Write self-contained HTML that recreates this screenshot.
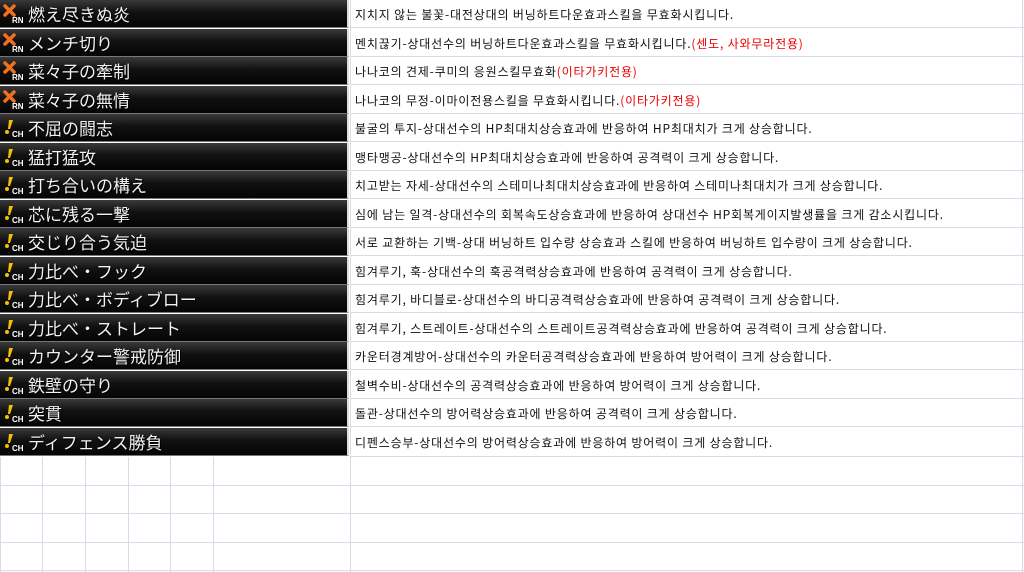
<!DOCTYPE html>
<html><head><meta charset="utf-8"><style>
body{margin:0;width:1024px;height:572px;overflow:hidden;background:#fff;position:relative;font-family:"Liberation Sans","Noto Sans CJK KR",sans-serif}
.r{position:absolute;left:0;width:1024px;height:28px}
.img{position:absolute;left:0;top:0;width:347px;height:27px;background:linear-gradient(#3a3a3a,#111 45%,#050505);border-bottom:1px solid #777;border-right:2px solid #ddd}
.jp{position:absolute;left:28px;top:2px;color:#f2f2f2;font:17px "Noto Sans CJK JP",sans-serif;line-height:24px;text-shadow:1px 1px 0 #000}
.ic{position:absolute;left:3px;top:4px;width:22px;height:20px}
.kr{position:absolute;left:355px;top:6px;font:12px "Noto Sans CJK KR",sans-serif;color:#111;letter-spacing:0.82px;white-space:nowrap}
.red{color:#e00}
.line{position:absolute;left:350px;right:0;bottom:0;height:1px;background:#d8dcea}
.v{position:absolute;background:#d8dcea}
</style></head><body>
<div style="position:absolute;left:350px;top:0;width:1px;height:572px;background:#d8dcea"></div>
<div style="position:absolute;left:1022px;top:0;width:1px;height:572px;background:#d8dcea"></div>

<script>
const rows=[
["x","燃え尽きぬ炎","지치지 않는 불꽃-대전상대의 버닝하트다운효과스킬을 무효화시킵니다.",""],
["x","メンチ切り","멘치끊기-상대선수의 버닝하트다운효과스킬을 무효화시킵니다.","(센도, 사와무라전용)"],
["x","菜々子の牽制","나나코의 견제-쿠미의 응원스킬무효화","(이타가키전용)"],
["x","菜々子の無情","나나코의 무정-이마이전용스킬을 무효화시킵니다.","(이타가키전용)"],
["c","不屈の闘志","불굴의 투지-상대선수의 HP최대치상승효과에 반응하여 HP최대치가 크게 상승합니다.",""],
["c","猛打猛攻","맹타맹공-상대선수의 HP최대치상승효과에 반응하여 공격력이 크게 상승합니다.",""],
["c","打ち合いの構え","치고받는 자세-상대선수의 스테미나최대치상승효과에 반응하여 스테미나최대치가 크게 상승합니다.",""],
["c","芯に残る一撃","심에 남는 일격-상대선수의 회복속도상승효과에 반응하여 상대선수 HP회복게이지발생률을 크게 감소시킵니다.",""],
["c","交じり合う気迫","서로 교환하는 기백-상대 버닝하트 입수량 상승효과 스킬에 반응하여 버닝하트 입수량이 크게 상승합니다.",""],
["c","力比べ・フック","힘겨루기, 훅-상대선수의 훅공격력상승효과에 반응하여 공격력이 크게 상승합니다.",""],
["c","力比べ・ボディブロー","힘겨루기, 바디블로-상대선수의 바디공격력상승효과에 반응하여 공격력이 크게 상승합니다.",""],
["c","力比べ・ストレート","힘겨루기, 스트레이트-상대선수의 스트레이트공격력상승효과에 반응하여 공격력이 크게 상승합니다.",""],
["c","カウンター警戒防御","카운터경계방어-상대선수의 카운터공격력상승효과에 반응하여 방어력이 크게 상승합니다.",""],
["c","鉄壁の守り","철벽수비-상대선수의 공격력상승효과에 반응하여 방어력이 크게 상승합니다.",""],
["c","突貫","돌관-상대선수의 방어력상승효과에 반응하여 공격력이 크게 상승합니다.",""],
["c","ディフェンス勝負","디펜스승부-상대선수의 방어력상승효과에 반응하여 방어력이 크게 상승합니다.",""]];
const ix='<svg class="ic" viewBox="0 0 22 20"><path d="M2 2 L11 11 M11 2 L2 11" stroke="#f07020" stroke-width="3.5" stroke-linecap="round"/><text x="9" y="19" font-size="8" font-family="Liberation Sans" font-weight="bold" fill="#fff">RN</text></svg>';
const ic='<svg class="ic" viewBox="0 0 22 20"><path d="M6 2 L10 2 L7 11 L5 11 Z" fill="#f5c000"/><circle cx="4" cy="14" r="2" fill="#f5c000"/><text x="9" y="19" font-size="8" font-family="Liberation Sans" font-weight="bold" fill="#fff">CH</text></svg>';
let h='';
rows.forEach((r,i)=>{const t=Math.round(i*28.5);
h+=`<div class="r" style="top:${t}px;height:${i==15?29:28}px"><div class="img">${r[0]=='x'?ix:ic}<div class="jp">${r[1]}</div></div><div class="kr">${r[2]}<span class="red">${r[3]}</span></div><div class="line"></div></div>`;});
[485,513,542,570].forEach(y=>h+=`<div class="v" style="left:0;top:${y}px;width:1024px;height:1px"></div>`);
[0,42,85,128,170,213].forEach(x=>h+=`<div class="v" style="left:${x}px;top:457px;width:1px;height:115px"></div>`);
document.write(h);
</script>
</body></html>
